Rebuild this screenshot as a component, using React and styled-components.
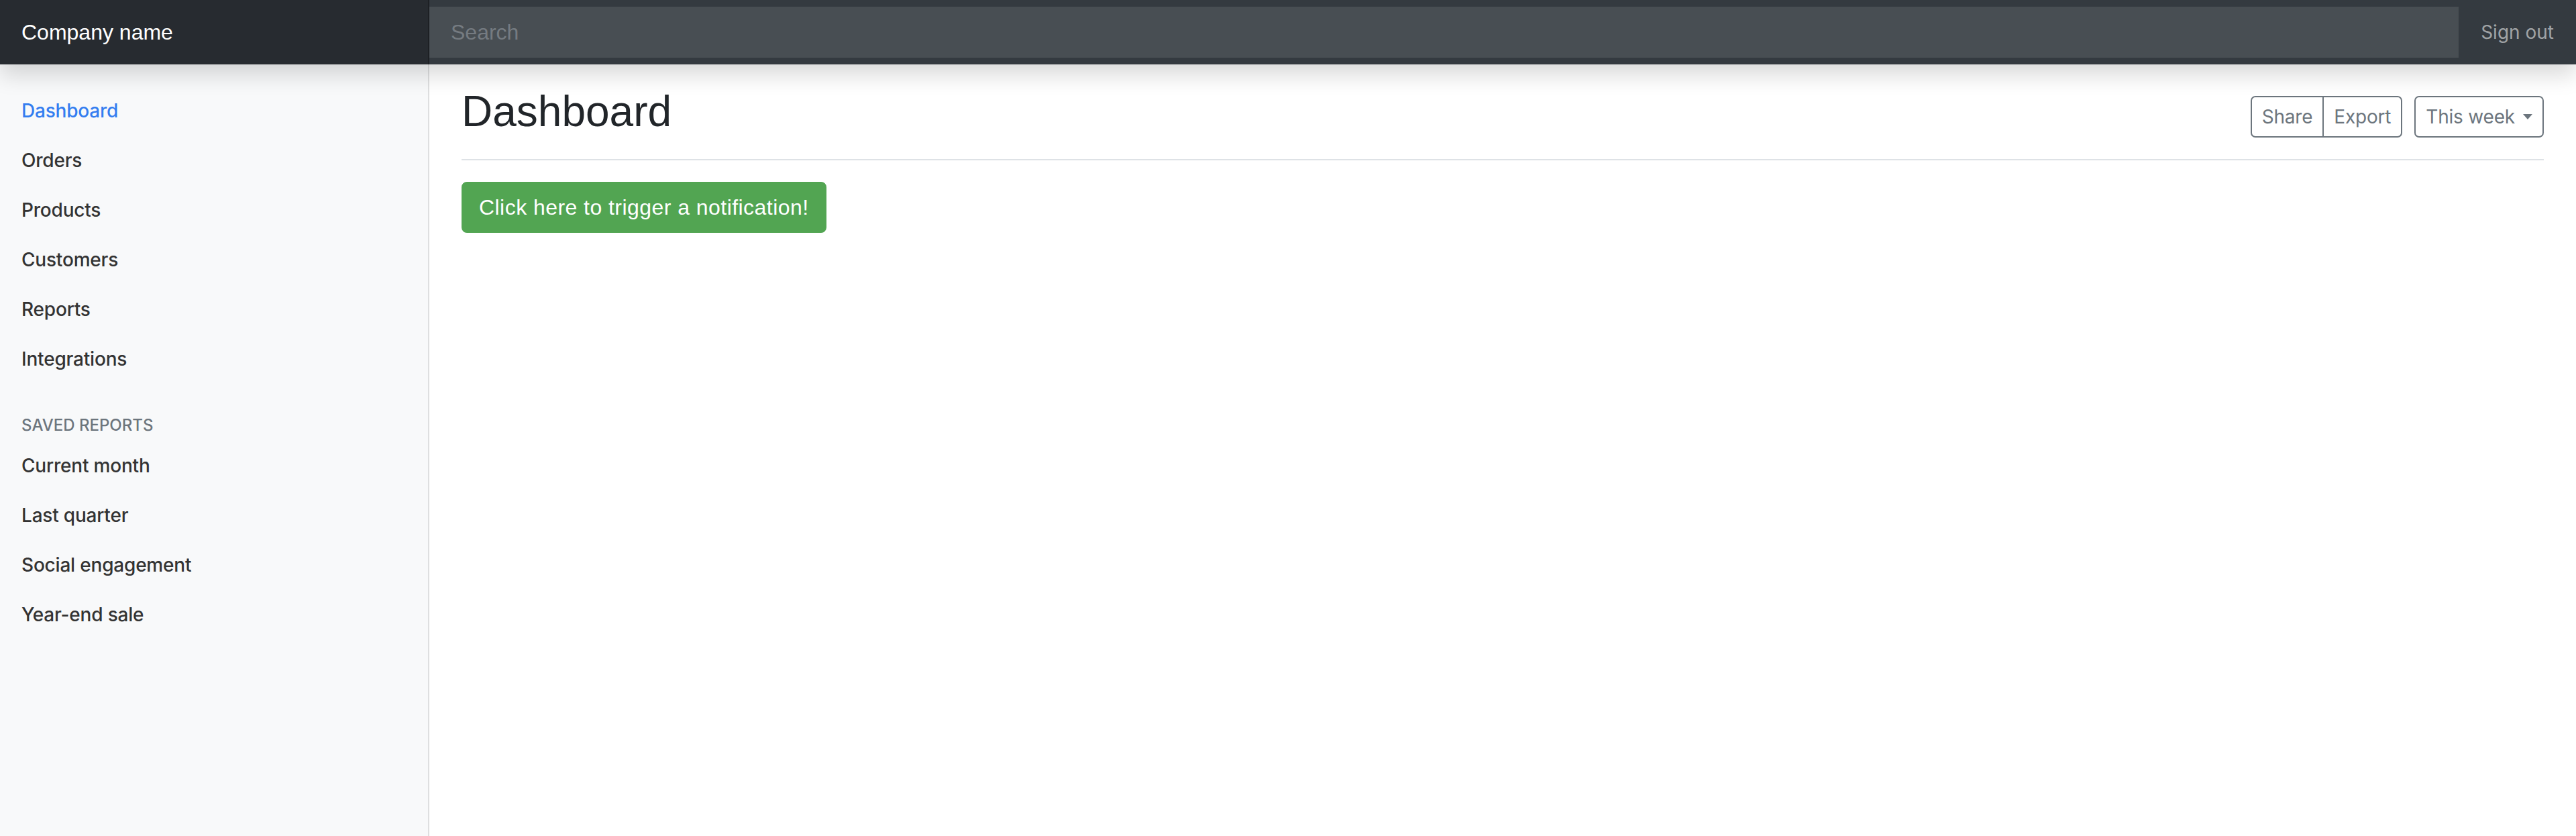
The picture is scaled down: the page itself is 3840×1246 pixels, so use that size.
import React from "react";
import styled, { createGlobalStyle } from "styled-components";

const GlobalStyle = createGlobalStyle`
  html, body { margin: 0; padding: 0; background: #fff; }
  * { box-sizing: border-box; }
`;

const SYS = `Inter, "Noto Sans", "DejaVu Sans", sans-serif`;
const HELV = `"Liberation Sans", Arial, sans-serif`;

const Page = styled.div`
  min-height: 1246px;
  display: flex;
  flex-direction: column;
`;

const Navbar = styled.header`
  position: relative;
  z-index: 2;
  height: 96px;
  display: flex;
  align-items: center;
  background: #343a40;
  box-shadow: 0 16px 32px rgba(0, 0, 0, 0.15);
`;

const Brand = styled.a`
  flex: none;
  width: 640px;
  height: 96px;
  padding: 0 32px;
  line-height: 96px;
  font-family: ${HELV};
  font-size: 32px;
  color: #fff;
  text-decoration: none;
  background: rgba(0, 0, 0, 0.25);
  box-shadow: inset -2px 0 0 rgba(0, 0, 0, 0.25);
`;

const Search = styled.input`
  flex: 1;
  min-width: 0;
  height: 76px;
  padding: 0 32px;
  border: 0;
  border-radius: 0;
  outline: none;
  background: rgba(255, 255, 255, 0.1);
  color: #fff;
  font-family: ${HELV};
  font-size: 32px;
  &::placeholder { color: #757b81; }
`;

const SignOut = styled.a`
  flex: none;
  padding: 0 33px;
  font-family: ${SYS};
  font-size: 28px;
  color: rgba(255, 255, 255, 0.55);
  text-decoration: none;
  white-space: nowrap;
`;

const Body = styled.div`
  flex: 1;
  display: flex;
`;

const Sidebar = styled.nav`
  flex: none;
  width: 640px;
  padding-top: 32px;
  background: #f8f9fa;
  box-shadow: inset -2px 0 0 rgba(0, 0, 0, 0.1);
`;

const NavList = styled.ul`
  list-style: none;
  margin: 0;
  padding: 0;
  display: flex;
  flex-direction: column;
`;

const NavLink = styled.a`
  display: block;
  padding: 16px 32px;
  font-family: ${SYS};
  font-size: 28px;
  font-weight: 500;
  line-height: 42px;
  letter-spacing: -0.2px;
  color: ${(p) => (p.$active ? "#337df0" : "#333")};
  text-decoration: none;
`;

const SideHeading = styled.h6`
  margin: 48px 32px 8px;
  font-family: ${SYS};
  font-size: 24px;
  font-weight: 500;
  line-height: 28.8px;
  text-transform: uppercase;
  color: #6c757d;
`;

const Main = styled.main`
  flex: 1;
  min-width: 0;
  padding: 0 48px;
`;

const Header = styled.div`
  display: flex;
  justify-content: space-between;
  align-items: center;
  padding: 32px 0 16px;
  margin-bottom: 32px;
  border-bottom: 2px solid #dee2e6;
`;

const Title = styled.h1`
  margin: 0 0 16px;
  font-family: ${HELV};
  font-size: 64px;
  font-weight: 400;
  line-height: 76.8px;
  color: #212529;
`;

const Toolbar = styled.div`
  display: flex;
  align-items: center;
`;

const Group = styled.div`
  display: flex;
  margin-right: 18px;
`;

const OutlineButton = styled.button`
  display: inline-flex;
  align-items: center;
  height: 62px;
  padding: 0 15px;
  border: 2px solid #6c757d;
  background: transparent;
  color: #6c757d;
  font-family: ${SYS};
  font-size: 28px;
  line-height: 42px;
  letter-spacing: -0.2px;
  border-radius: ${(p) =>
    p.$pos === "first" ? "7px 0 0 7px" : p.$pos === "last" ? "0 7px 7px 0" : "7px"};
  margin-left: ${(p) => (p.$pos === "last" ? "-2px" : "0")};
  cursor: pointer;
`;

const Caret = styled.span`
  display: inline-block;
  margin-left: 12px;
  width: 0;
  height: 0;
  border-top: 8px solid #6c757d;
  border-left: 7px solid transparent;
  border-right: 7px solid transparent;
`;

const GreenButton = styled.button`
  display: inline-block;
  padding: 12px 24px;
  border: 2px solid #52a552;
  border-radius: 8px;
  background: #52a552;
  color: #fff;
  font-family: ${HELV};
  font-size: 32px;
  line-height: 48px;
  letter-spacing: 0.45px;
  cursor: pointer;
`;

const mainLinks = ["Dashboard", "Orders", "Products", "Customers", "Reports", "Integrations"];
const savedLinks = ["Current month", "Last quarter", "Social engagement", "Year-end sale"];

export default function App() {
  return (
    <Page>
      <GlobalStyle />
      <Navbar>
        <Brand href="#">Company name</Brand>
        <Search type="text" placeholder="Search" />
        <SignOut href="#">Sign out</SignOut>
      </Navbar>
      <Body>
        <Sidebar>
          <NavList>
            {mainLinks.map((l, i) => (
              <li key={l}>
                <NavLink href="#" $active={i === 0}>{l}</NavLink>
              </li>
            ))}
          </NavList>
          <SideHeading>Saved reports</SideHeading>
          <NavList>
            {savedLinks.map((l) => (
              <li key={l}>
                <NavLink href="#">{l}</NavLink>
              </li>
            ))}
          </NavList>
        </Sidebar>
        <Main>
          <Header>
            <Title>Dashboard</Title>
            <Toolbar>
              <Group>
                <OutlineButton $pos="first">Share</OutlineButton>
                <OutlineButton $pos="last">Export</OutlineButton>
              </Group>
              <OutlineButton>
                This week
                <Caret />
              </OutlineButton>
            </Toolbar>
          </Header>
          <GreenButton>Click here to trigger a notification!</GreenButton>
        </Main>
      </Body>
    </Page>
  );
}
